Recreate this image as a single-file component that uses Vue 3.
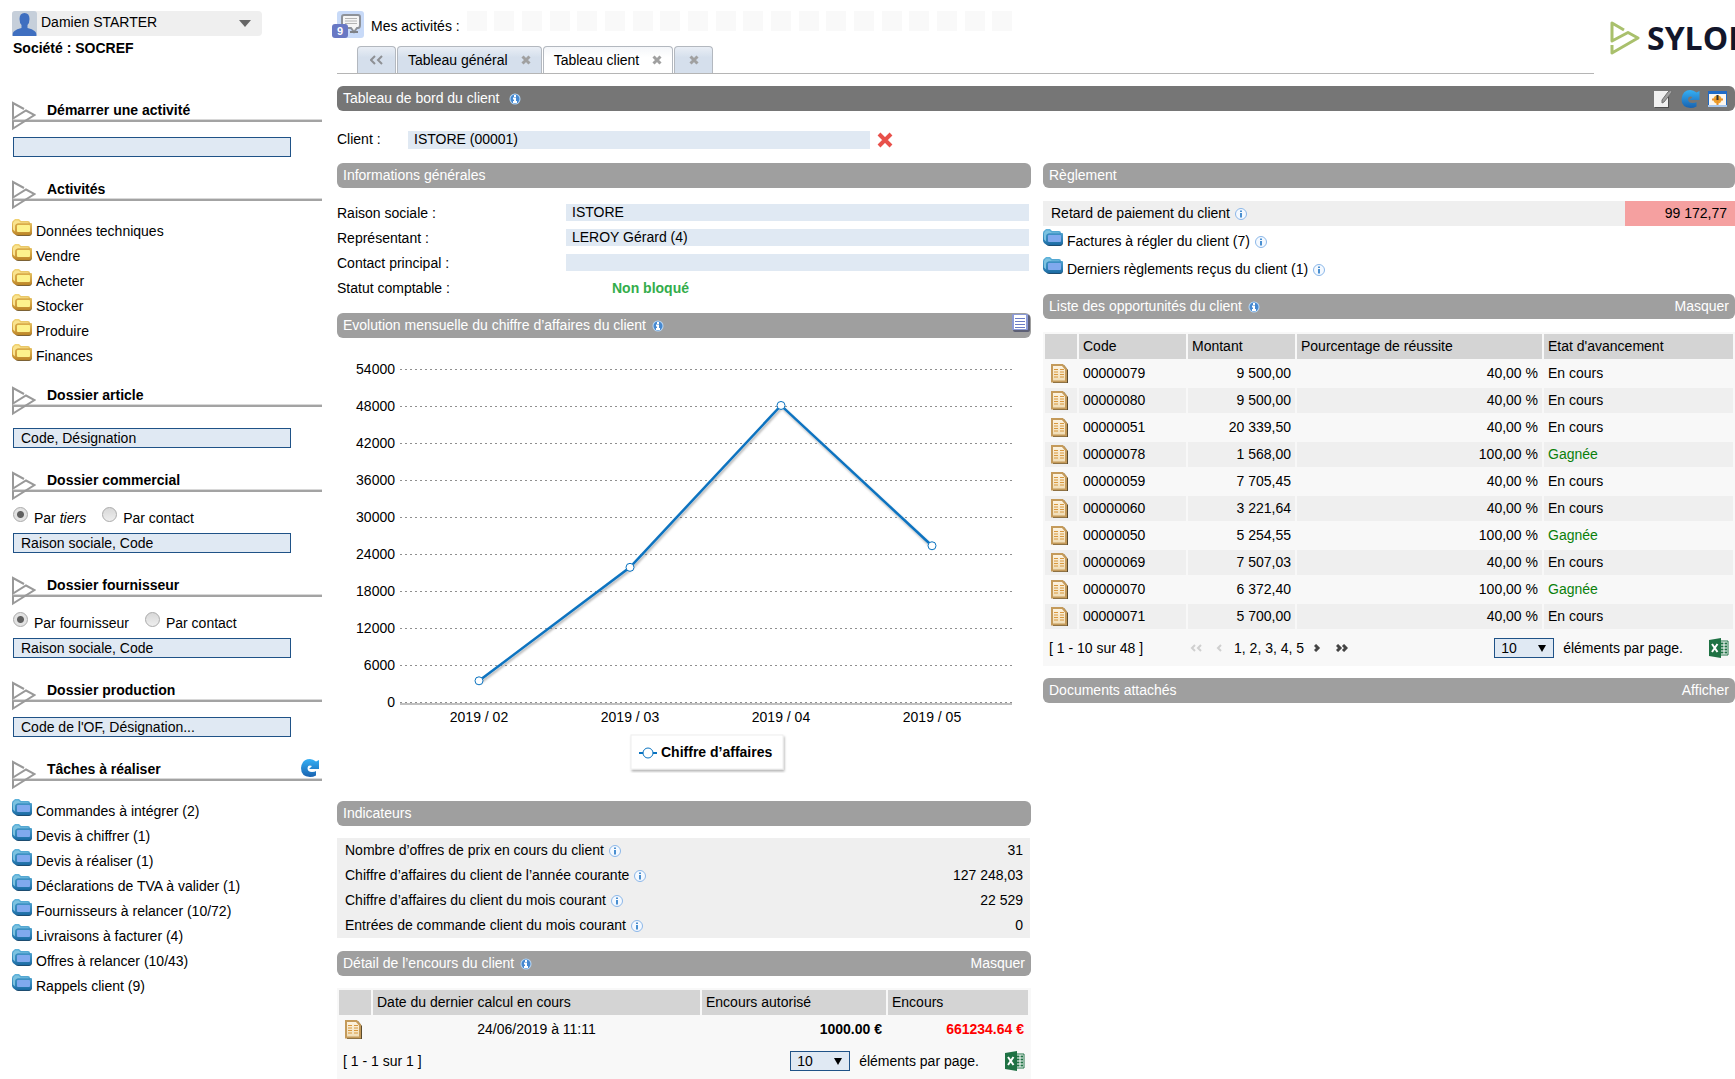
<script setup>
import { ref } from 'vue'

const activities = ['Données techniques', 'Vendre', 'Acheter', 'Stocker', 'Produire', 'Finances']
const tasks = [
  'Commandes à intégrer (2)',
  'Devis à chiffrer (1)',
  'Devis à réaliser (1)',
  'Déclarations de TVA à valider (1)',
  'Fournisseurs à relancer (10/72)',
  'Livraisons à facturer (4)',
  'Offres à relancer (10/43)',
  'Rappels client (9)',
]
const commercialBy = ref('tiers')
const supplierBy = ref('fournisseur')

const infos = [
  { id: 'raison', label: 'Raison sociale :', value: 'ISTORE' },
  { id: 'representant', label: 'Représentant :', value: 'LEROY Gérard (4)' },
  { id: 'contact', label: 'Contact principal :', value: '' },
]

const indicators = [
  { label: 'Nombre d’offres de prix en cours du client', value: '31' },
  { label: 'Chiffre d’affaires du client de l’année courante', value: '127 248,03' },
  { label: 'Chiffre d’affaires du client du mois courant', value: '22 529' },
  { label: 'Entrées de commande client du mois courant', value: '0' },
]

const opportunities = [
  ['00000079', '9 500,00', '40,00 %', 'En cours'],
  ['00000080', '9 500,00', '40,00 %', 'En cours'],
  ['00000051', '20 339,50', '40,00 %', 'En cours'],
  ['00000078', '1 568,00', '100,00 %', 'Gagnée'],
  ['00000059', '7 705,45', '40,00 %', 'En cours'],
  ['00000060', '3 221,64', '40,00 %', 'En cours'],
  ['00000050', '5 254,55', '100,00 %', 'Gagnée'],
  ['00000069', '7 507,03', '40,00 %', 'En cours'],
  ['00000070', '6 372,40', '100,00 %', 'Gagnée'],
  ['00000071', '5 700,00', '40,00 %', 'En cours'],
]

// Chart geometry, in viewBox units
const chart = { left: 63, right: 675, base: 365, step: 37, unit: 6000 }
const ticks = Array.from({ length: 10 }, (_, i) => ({
  value: i * chart.unit,
  y: chart.base - i * chart.step,
}))
const points = [
  { month: '2019 / 02', amount: 3600 },
  { month: '2019 / 03', amount: 22000 },
  { month: '2019 / 04', amount: 48250 },
  { month: '2019 / 05', amount: 25500 },
].map((p, i) => ({
  ...p,
  x: 142 + i * 151,
  y: chart.base - (p.amount / chart.unit) * chart.step,
}))
const line = points.map((p) => `${p.x},${p.y}`).join(' ')
</script>

<template>
  <svg class="defs" aria-hidden="true">
    <defs>
      <linearGradient id="g-gold" x1="0" y1="0" x2="0" y2="1">
        <stop offset="0" stop-color="#f2d474" /><stop offset="1" stop-color="#bd8526" />
      </linearGradient>
      <linearGradient id="g-blue" x1="0" y1="0" x2="0" y2="1">
        <stop offset="0" stop-color="#5fb4dc" /><stop offset="1" stop-color="#1a6aa3" />
      </linearGradient>
      <linearGradient id="g-refresh" x1="0" y1="0" x2="0" y2="1">
        <stop offset="0" stop-color="#35b0f5" /><stop offset="1" stop-color="#1862b0" />
      </linearGradient>
      <linearGradient id="g-sheet" x1="0" y1="0" x2="0" y2="1">
        <stop offset="0" stop-color="#fdf4e2" /><stop offset="1" stop-color="#f0dcb4" />
      </linearGradient>
    </defs>
    <symbol id="i-mark" viewBox="0 0 24 30">
      <path d="M12 8 1 2v15.500L14 9.500 22.500 14 1 27.500V20" fill="none" stroke="currentColor" stroke-width="2" />
    </symbol>
    <symbol id="i-folder-yellow" viewBox="0 0 20 17">
      <path d="M3 13h17q0 4-3 4H6q-2 0-3-2z" fill="#7c6235" />
      <path d="M0 4q0-2 2-3l1-1h4l2 2h7q2 0 2 2h1q1 0 1 1v8q0 3-3 3H5q-2 0-4-2l-1-2z" fill="url(#g-gold)" />
      <path d="M1 4l2-2.500h3.500l2 2H16l1 1H6q-3 0-3 3v5l-2-2z" fill="#fae48f" />
      <path d="M4 13V7q0-2 2-2h12" fill="none" stroke="#d4a03c" />
      <rect x="5" y="6" width="13" height="7" rx="1" fill="#fdf28c" />
    </symbol>
    <symbol id="i-folder-blue" viewBox="0 0 20 17">
      <path d="M3 13h17q0 4-3 4H6q-2 0-3-2z" fill="#1d4c70" />
      <path d="M0 4q0-2 2-3l1-1h4l2 2h7q2 0 2 2h1q1 0 1 1v8q0 3-3 3H5q-2 0-4-2l-1-2z" fill="url(#g-blue)" />
      <path d="M1 4l2-2.500h3.500l2 2H16l1 1H6q-3 0-3 3v5l-2-2z" fill="#7cc2e0" />
      <path d="M4 13V7q0-2 2-2h12" fill="none" stroke="#3488c0" />
      <rect x="5" y="6" width="13" height="7" rx="1" fill="#80a9ee" />
    </symbol>
    <symbol id="i-refresh" viewBox="0 0 18 18">
      <path d="M18 1v9H8l3-3Q7 5.500 6.500 9q0 4 4.500 4 3 0 4-1v4.500q-3 1.500-6 1.500Q0 17.500 0 9 1 0 9 0q3 0 6 2.500z" fill="url(#g-refresh)" />
    </symbol>
    <symbol id="i-info" viewBox="0 0 12 12">
      <circle cx="6" cy="6" r="5.500" fill="#f4f9ff" stroke="#8bb7e8" />
      <path d="M6 2.500v1.500M6 5v4.500" stroke="#4a8fd0" stroke-width="2" />
    </symbol>
    <symbol id="i-info-bar" viewBox="0 0 12 12">
      <circle cx="6" cy="6" r="5.500" fill="#b9d8f6" />
      <circle cx="6" cy="6" r="4.500" fill="#4588d0" />
      <path d="M6 2v2M4 5.500h2V9M4 9h4" fill="none" stroke="#fff" stroke-width="2" />
    </symbol>
    <symbol id="i-sheet" viewBox="0 0 17 19">
      <path d="M2 1h11l4 5v13H2z" fill="#5a4a2c" />
      <path d="M1 1h10.500L15 5v12.500H1z" fill="url(#g-sheet)" stroke="#c49a5a" stroke-width="2" />
      <path d="M3 5.500h4M9 5.500h4M3 8h4M9 8h4M3 10.500h4M9 10.500h4M3 13h4M9 13h4" stroke="#d8983f" />
    </symbol>
    <symbol id="i-cross" viewBox="0 0 10 10">
      <path d="M1.500 1.500l7 7m0-7l-7 7" stroke="#a0a0a0" stroke-width="3" />
    </symbol>
    <symbol id="i-excel" viewBox="0 0 20 20">
      <path d="M11 3h8v14h-8z" fill="#fff" stroke="#1f7244" />
      <path d="M12 5.500h6M12 8.500h6M12 11.500h6M12 14.500h6" stroke="#1f7244" stroke-width="2" stroke-dasharray="2.500 1" />
      <path d="M0 2 12 0v20L0 18z" fill="#1f7244" />
      <path d="M3 6l5.500 8M8.500 6L3 14" stroke="#fff" stroke-width="2" />
    </symbol>
  </svg>

  <div class="page">
    <aside class="sidebar">
      <button class="user" type="button">
        <svg class="avatar" viewBox="0 0 25 25" aria-hidden="true">
          <rect width="25" height="25" rx="3" fill="#c6cfda" />
          <path d="M12.500 2q5 0 5 6 0 4-2 6v3q5 1 7 3 2 1 2 5H.500q0-4 2-5 2-2 7-3v-3q-2-2-2-6 0-6 5-6z" fill="#3f6fc0" />
        </svg>
        <span>Damien STARTER</span>
        <svg class="caret" viewBox="0 0 12 7" aria-hidden="true"><path d="M0 0h12L6 7z" fill="#666" /></svg>
      </button>
      <p class="company">Société : SOCREF</p>

      <section class="block">
        <h2><svg class="mark"><use href="#i-mark" /></svg><label for="start">Démarrer une activité</label></h2>
        <input id="start" type="text" class="search tight" />
      </section>

      <section class="block">
        <h2><svg class="mark"><use href="#i-mark" /></svg>Activités</h2>
        <ul class="links">
          <li v-for="a in activities" :key="a">
            <a href="#"><svg class="folder"><use href="#i-folder-yellow" /></svg>{{ a }}</a>
          </li>
        </ul>
      </section>

      <section class="block">
        <h2><svg class="mark"><use href="#i-mark" /></svg><label for="article">Dossier article</label></h2>
        <input id="article" type="text" class="search loose" placeholder="Code, Désignation" />
      </section>

      <section class="block">
        <h2><svg class="mark"><use href="#i-mark" /></svg><label for="commercial">Dossier commercial</label></h2>
        <div class="radios">
          <label><input v-model="commercialBy" type="radio" name="commercial" value="tiers" /><span>Par <em>tiers</em></span></label>
          <label><input v-model="commercialBy" type="radio" name="commercial" value="contact" /><span>Par contact</span></label>
        </div>
        <input id="commercial" type="text" class="search" placeholder="Raison sociale, Code" />
      </section>

      <section class="block">
        <h2><svg class="mark"><use href="#i-mark" /></svg><label for="supplier">Dossier fournisseur</label></h2>
        <div class="radios">
          <label><input v-model="supplierBy" type="radio" name="supplier" value="fournisseur" /><span>Par fournisseur</span></label>
          <label><input v-model="supplierBy" type="radio" name="supplier" value="contact" /><span>Par contact</span></label>
        </div>
        <input id="supplier" type="text" class="search" placeholder="Raison sociale, Code" />
      </section>

      <section class="block">
        <h2><svg class="mark"><use href="#i-mark" /></svg><label for="production">Dossier production</label></h2>
        <input id="production" type="text" class="search tight" placeholder="Code de l'OF, Désignation..." />
      </section>

      <section class="block">
        <h2>
          <svg class="mark"><use href="#i-mark" /></svg>Tâches à réaliser
          <button class="reload" type="button" aria-label="Actualiser"><svg class="refresh"><use href="#i-refresh" /></svg></button>
        </h2>
        <ul class="links">
          <li v-for="t in tasks" :key="t">
            <a href="#"><svg class="folder"><use href="#i-folder-blue" /></svg>{{ t }}</a>
          </li>
        </ul>
      </section>
    </aside>

    <main class="main">
      <header class="top">
        <div class="nav">
          <div class="mine">
            <button class="messages" type="button" aria-label="Messages">
              <svg viewBox="0 0 27 27" aria-hidden="true">
                <rect width="27" height="27" rx="3" fill="#c8daf8" />
                <path d="M7 4h14q2 0 2 2v8q0 3-2 3h-1l-3 4-3-4H7q-2 0-2-3V6q0-2 2-2z" fill="#f5f5f5" stroke="#8e9299" stroke-width="2" />
                <path d="M8 7.500h12M8 10h12M8 12.500h12" stroke="#b4b4b4" />
                <path d="M13 21h8" stroke="#7f8288" stroke-width="2" />
              </svg>
              <span class="badge">9</span>
            </button>
            <span>Mes activités :</span>
            <div class="slots"><i v-for="n in 20" :key="n"></i></div>
          </div>
          <nav class="tabs">
            <button class="tab narrow" type="button" aria-label="Précédent">
              <svg class="back" viewBox="0 0 14 10" aria-hidden="true"><path d="M5 1 1 5l4 4M12 1 8 5l4 4" fill="none" stroke="#8e9094" stroke-width="2" /></svg>
            </button>
            <button class="tab" type="button">Tableau général<svg class="cross"><use href="#i-cross" /></svg></button>
            <button class="tab active" type="button">Tableau client<svg class="cross"><use href="#i-cross" /></svg></button>
            <button class="tab narrow" type="button" aria-label="Tout fermer"><svg class="cross"><use href="#i-cross" /></svg></button>
          </nav>
        </div>
        <div class="logo">
          <svg class="logo-mark" viewBox="0 0 30 34" aria-hidden="true">
            <path d="M14 9 2 2v18L18 11.500 28 17 2 32V24" fill="none" stroke="#a9c06c" stroke-width="3" stroke-linejoin="round" />
          </svg>
          <span>SYLOB</span>
        </div>
      </header>

      <div class="bar title">
        <h1>Tableau de bord du client</h1>
        <svg class="info"><use href="#i-info-bar" /></svg>
        <div class="tools">
          <button type="button" aria-label="Modifier">
            <svg viewBox="0 0 19 18" aria-hidden="true">
              <path d="M1 2h14v16H1z" fill="#4f4f4f" /><path d="M0 1h14v16H0z" fill="#f1f1f1" />
              <path d="M17 0l1 2-8 10-2 1v-3l6-8z" fill="#a0a0a0" stroke="#6f6f6f" />
            </svg>
          </button>
          <button type="button" aria-label="Actualiser"><svg class="refresh"><use href="#i-refresh" /></svg></button>
          <button type="button" aria-label="Planifier">
            <svg viewBox="0 0 19 18" aria-hidden="true">
              <path d="M0 1h19v16H0z" fill="#1f6bc8" /><path d="M1 4h17v11H1z" fill="#fbf6ef" /><path d="M0 15h19v2H0z" fill="#a9c8ee" />
              <circle cx="9.500" cy="9.500" r="4" fill="#f0a52c" /><path d="M4 9.500h11M9.500 9v6" stroke="#e8912a" stroke-width="2" />
              <path d="M9.500 5v5" stroke="#333" stroke-width="2" />
            </svg>
          </button>
        </div>
      </div>

      <div class="client">
        <label for="client">Client :</label>
        <input id="client" type="text" class="value" value="ISTORE (00001)" readonly />
        <button type="button" aria-label="Effacer le client">
          <svg viewBox="0 0 16 16" aria-hidden="true"><path d="M2 2l12 12M14 2L2 14" stroke="#e8504a" stroke-width="4" /></svg>
        </button>
      </div>

      <div class="columns">
        <div class="column">
          <div class="bar"><h2>Informations générales</h2></div>
          <div class="form">
            <div v-for="f in infos" :key="f.id" class="field">
              <label :for="f.id">{{ f.label }}</label>
              <input :id="f.id" type="text" class="value" :value="f.value" readonly />
            </div>
            <div class="field"><span class="lbl">Statut comptable :</span><strong class="status">Non bloqué</strong></div>
          </div>

          <div class="bar">
            <h2>Evolution mensuelle du chiffre d’affaires du client</h2>
            <svg class="info"><use href="#i-info-bar" /></svg>
            <button class="listing" type="button" aria-label="Voir les données">
              <svg viewBox="0 0 18 18" aria-hidden="true">
                <rect x="1" y="1" width="17" height="17" rx="2" fill="#5d6076" /><rect width="16" height="16" rx="1" fill="#8b9ad6" />
                <path d="M2 1h12v14H2z" fill="#fff" /><path d="M3 4.500h10M3 7.500h10M3 10.500h10M3 13.500h10" stroke="#6a7cc6" />
              </svg>
            </button>
          </div>
          <svg class="chart" viewBox="0 0 694 463" role="img" aria-label="Evolution mensuelle du chiffre d’affaires">
            <defs>
              <filter id="shade" x="-10%" y="-10%" width="120%" height="120%">
                <feDropShadow dx="1" dy="2" stdDeviation="1" flood-opacity=".3" />
              </filter>
            </defs>
            <rect :x="chart.left" :y="chart.base" :width="chart.right - chart.left" height="2" fill="#c0c0c0" />
            <g v-for="t in ticks" :key="t.value">
              <path :d="`M${chart.left} ${t.y - 0.5}H${chart.right}`" stroke="#8f8f8f" stroke-dasharray="2 3" />
              <text x="58" :y="t.y + 4" text-anchor="end">{{ t.value }}</text>
            </g>
            <polyline :points="line" fill="none" stroke="#0a73c0" stroke-width="2.500" filter="url(#shade)" />
            <g v-for="p in points" :key="p.month">
              <circle :cx="p.x" :cy="p.y" r="4" fill="#fff" stroke="#0a73c0" />
              <text :x="p.x" y="384" text-anchor="middle">{{ p.month }}</text>
            </g>
            <rect x="294" y="397" width="152" height="34" fill="#fff" stroke="#eee" filter="url(#shade)" />
            <path d="M302 415h18" stroke="#0a73c0" stroke-width="2" />
            <circle cx="311" cy="415" r="5" fill="#fff" stroke="#0a73c0" />
            <text x="324" y="419" font-weight="bold">Chiffre d’affaires</text>
          </svg>

          <div class="bar"><h2>Indicateurs</h2></div>
          <dl class="indicators">
            <div v-for="i in indicators" :key="i.label">
              <dt>{{ i.label }}<svg class="info"><use href="#i-info" /></svg></dt>
              <dd>{{ i.value }}</dd>
            </div>
          </dl>

          <div class="bar">
            <h2>Détail de l’encours du client</h2>
            <svg class="info"><use href="#i-info-bar" /></svg>
            <a href="#" class="toggle">Masquer</a>
          </div>
          <div class="panel">
            <table class="grid credit">
              <colgroup><col class="c-icon" /><col class="c-date" /><col class="c-limit" /><col class="c-used" /></colgroup>
              <thead><tr><th></th><th>Date du dernier calcul en cours</th><th>Encours autorisé</th><th>Encours</th></tr></thead>
              <tbody>
                <tr>
                  <td class="ico"><svg class="sheet"><use href="#i-sheet" /></svg></td>
                  <td class="mid">24/06/2019 à 11:11</td>
                  <td class="num"><b>1000.00 €</b></td>
                  <td class="num over"><b>661234.64 €</b></td>
                </tr>
              </tbody>
            </table>
            <div class="pager">
              <span>[ 1 - 1 sur 1 ]</span>
              <label class="size"><span class="picker"><select><option>10</option></select></span>éléments par page.</label>
              <button class="export" type="button" aria-label="Exporter vers Excel"><svg><use href="#i-excel" /></svg></button>
            </div>
          </div>
        </div>

        <div class="column right">
          <div class="bar"><h2>Règlement</h2></div>
          <div class="late">
            <span>Retard de paiement du client<svg class="info"><use href="#i-info" /></svg></span>
            <output>99 172,77</output>
          </div>
          <ul class="links payments">
            <li><a href="#"><svg class="folder"><use href="#i-folder-blue" /></svg>Factures à régler du client (7)</a><svg class="info"><use href="#i-info" /></svg></li>
            <li><a href="#"><svg class="folder"><use href="#i-folder-blue" /></svg>Derniers règlements reçus du client (1)</a><svg class="info"><use href="#i-info" /></svg></li>
          </ul>

          <div class="bar">
            <h2>Liste des opportunités du client</h2>
            <svg class="info"><use href="#i-info-bar" /></svg>
            <a href="#" class="toggle">Masquer</a>
          </div>
          <div class="panel">
            <table class="grid">
              <colgroup><col class="c-icon" /><col class="c-code" /><col class="c-code" /><col class="c-rate" /><col /></colgroup>
              <thead><tr><th></th><th>Code</th><th>Montant</th><th>Pourcentage de réussite</th><th>Etat d'avancement</th></tr></thead>
              <tbody>
                <tr v-for="o in opportunities" :key="o[0]">
                  <td class="ico"><svg class="sheet"><use href="#i-sheet" /></svg></td>
                  <td>{{ o[0] }}</td>
                  <td class="num">{{ o[1] }}</td>
                  <td class="num">{{ o[2] }}</td>
                  <td :class="{ won: o[3] === 'Gagnée' }">{{ o[3] }}</td>
                </tr>
              </tbody>
            </table>
            <div class="pager">
              <span class="range">[ 1 - 10 sur 48 ]</span>
              <div class="pages">
                <svg class="step" viewBox="0 0 12 8" aria-hidden="true"><path d="M5 1 2 4l3 3M11 1 8 4l3 3" fill="none" stroke="#d0d0d0" stroke-width="2" /></svg>
                <svg class="step" viewBox="0 0 12 8" aria-hidden="true"><path d="M9 1 6 4l3 3" fill="none" stroke="#d0d0d0" stroke-width="2" /></svg>
                <span>1, <a href="#">2</a>, <a href="#">3</a>, <a href="#">4</a>, <a href="#">5</a></span>
                <svg class="step" viewBox="0 0 12 8" aria-hidden="true"><path d="M1 1l3 3-3 3" fill="none" stroke="#444" stroke-width="3" /></svg>
                <svg class="step" viewBox="0 0 12 8" aria-hidden="true"><path d="M1 1l3 3-3 3M7 1l3 3-3 3" fill="none" stroke="#444" stroke-width="3" /></svg>
              </div>
              <label class="size"><span class="picker"><select><option>10</option></select></span>éléments par page.</label>
              <button class="export" type="button" aria-label="Exporter vers Excel"><svg><use href="#i-excel" /></svg></button>
            </div>
          </div>

          <div class="bar"><h2>Documents attachés</h2><a href="#" class="toggle">Afficher</a></div>
        </div>
      </div>
    </main>
  </div>
</template>

<style>
body {
  margin: 0;
  background: #fff;
  overflow-x: hidden;
}
</style>

<style scoped>
.defs {
  position: absolute;
  width: 0;
  height: 0;
}
.page {
  display: grid;
  grid-template-columns: 325px minmax(0, 1fr);
  gap: 12px;
  font: 14px/25px "Liberation Sans", Arial, sans-serif;
  color: #000;
}
h1, h2, p, ul, dl, dd {
  margin: 0;
  padding: 0;
}
a {
  color: inherit;
  text-decoration: none;
}
button, input, select {
  font: inherit;
  color: inherit;
  box-sizing: border-box;
  margin: 0;
}
button {
  border: 0;
  padding: 0;
  background: none;
}
svg {
  display: block;
  flex: none;
}

/* Sidebar */
.sidebar {
  padding: 11px 3px 0 12px;
}
.user {
  display: flex;
  align-items: center;
  gap: 4px;
  width: 250px;
  height: 25px;
  padding-right: 11px;
  border-radius: 4px;
  background: #efefef;
}
.avatar {
  width: 25px;
  height: 25px;
}
.user span {
  line-height: 22px;
  padding-bottom: 3px;
}
.caret {
  width: 12px;
  height: 7px;
  margin-left: auto;
}
.company {
  margin-bottom: 40px;
  padding-left: 1px;
  font-weight: bold;
}
.block {
  margin-bottom: 23px;
}
.block:has(.links) {
  margin-bottom: 17px;
}
.block h2 {
  display: flex;
  height: 30px;
  gap: 11px;
  font-size: 14px;
  line-height: 18px;
  background: linear-gradient(#d8d8d8 0 1px, #a3a3a3 1px 3px) 0 18px / 100% 3px no-repeat;
}
.mark {
  width: 24px;
  height: 30px;
  color: #999;
}
.reload {
  height: 18px;
  margin: -1px 3px 0 auto;
}
.refresh {
  width: 18px;
  height: 18px;
}
.search {
  display: block;
  width: 278px;
  height: 20px;
  margin-left: 1px;
  padding: 0 7px;
  border: 1px solid #1f5287;
  border-radius: 0;
  background: #e0e9f3;
}
.search::placeholder {
  color: #000;
  opacity: 1;
}
.tight {
  margin-top: 6px;
}
.loose {
  margin-top: 12px;
}
.links {
  list-style: none;
}
.block .links {
  padding-top: 9px;
}
.links li, .links a {
  display: flex;
  height: 25px;
}
.links a {
  gap: 4px;
}
.folder {
  width: 20px;
  height: 17px;
}
.radios {
  display: flex;
  gap: 16px;
  height: 32px;
  padding-left: 1px;
}
.radios label {
  display: flex;
  gap: 6px;
  line-height: 34px;
}
.radios input {
  appearance: none;
  width: 15px;
  height: 15px;
  margin-top: 6px;
  border: 1px solid #aaa;
  border-radius: 50%;
  background: linear-gradient(#d8d8d8, #eee);
}
.radios input:checked {
  background: radial-gradient(circle, #606060 0 3px, #e2e2e2 4px);
}

/* Header */
.top {
  display: flex;
  height: 74px;
  margin-bottom: 12px;
}
.nav {
  flex: 1;
  display: flex;
  flex-direction: column;
  justify-content: space-between;
  padding-top: 11px;
  border-bottom: 1px solid #b5b5b5;
  box-sizing: border-box;
}
.mine {
  display: flex;
  gap: 7px;
  height: 27px;
  line-height: 30px;
}
.messages {
  position: relative;
  width: 27px;
  height: 27px;
}
.badge {
  position: absolute;
  left: -5px;
  bottom: 0;
  width: 16px;
  height: 14px;
  border-radius: 3px;
  background: #6878c4;
  color: #fff;
  font: bold 11px/14px "Liberation Sans", Arial, sans-serif;
}
.slots {
  display: flex;
  justify-content: space-between;
  width: 546px;
}
.slots i {
  width: 20px;
  height: 20px;
  background: #f9f9f9;
}
.tabs {
  display: flex;
  gap: 1px;
  padding-left: 20px;
}
.tab {
  display: flex;
  align-items: center;
  justify-content: center;
  gap: 13px;
  height: 27px;
  padding: 0 10px;
  border: 1px solid #b3b8bf;
  border-bottom: 0;
  border-radius: 4px 4px 0 0;
  background: linear-gradient(#e9eef5, #d5dfec 40%);
}
.tab.active {
  background: linear-gradient(#f4f6f9, #fff 40%);
}
.tab.narrow {
  width: 39px;
}
.cross {
  width: 10px;
  height: 10px;
}
.back {
  width: 14px;
  height: 10px;
}
.logo {
  display: flex;
  gap: 7px;
  width: 125px;
  padding: 21px 0 0 16px;
  overflow: hidden;
  color: #12162b;
  font: bold 32px/34px "Open Sans", "Noto Sans", sans-serif;
}
.logo-mark {
  width: 30px;
  height: 34px;
}

/* Bars */
.bar {
  display: flex;
  align-items: center;
  gap: 6px;
  height: 25px;
  padding: 0 6px;
  border-radius: 6px;
  background: #9f9f9f;
  color: #fff;
}
.bar h1, .bar h2 {
  font-size: 14px;
  font-weight: normal;
}
.bar.title {
  gap: 10px;
  background: #767676;
}
.info {
  width: 12px;
  height: 12px;
}
.toggle {
  margin-left: auto;
}
.tools {
  display: flex;
  align-items: center;
  gap: 8px;
  margin-left: auto;
  padding-right: 2px;
}
.tools svg {
  width: 19px;
  height: 18px;
}
.listing {
  align-self: flex-start;
  margin: 1px -5px 0 auto;
}
.listing svg {
  width: 18px;
  height: 18px;
}

/* Client */
.client {
  display: flex;
  align-items: center;
  height: 24px;
  margin: 17px 0 11px;
}
.client label {
  width: 71px;
  padding-bottom: 2px;
}
.client .value {
  flex: 0 1 462px;
  height: 18px;
  padding-bottom: 2px;
}
.client svg {
  width: 16px;
  height: 16px;
  margin-left: 7px;
}
.value {
  height: 17px;
  padding: 0 6px;
  border: 0;
  border-radius: 0;
  background: #e0e9f3;
}
.columns {
  display: grid;
  grid-template-columns: minmax(0, 694fr) minmax(0, 692fr);
  gap: 12px;
  align-items: start;
}
.form {
  margin: 12px 2px 13px 0;
}
.field {
  display: flex;
  align-items: center;
  height: 25px;
}
.field label, .lbl {
  flex: 0 0 229px;
  padding-top: 2px;
}
.field .value {
  flex: 1;
  min-width: 0;
}
.status {
  padding: 2px 0 0 46px;
  color: #33ad4b;
}
.chart {
  width: 100%;
  height: auto;
  font-size: 14px;
}
.indicators {
  margin: 12px 1px 13px 0;
  background: #efefef;
}
.indicators div {
  display: flex;
  justify-content: space-between;
  padding: 0 7px 0 8px;
}
.indicators dt, .late span {
  display: flex;
  align-items: center;
  gap: 5px;
}

/* Tables */
.panel {
  margin: 12px 0;
  padding-bottom: 1px;
  background: #f8f8f8;
}
.credit {
  padding-right: 1px;
}
.panel:last-child {
  margin-bottom: 0;
}
.grid {
  width: 100%;
  table-layout: fixed;
  border-collapse: separate;
  border-spacing: 2px;
}
.grid th, .grid td {
  height: 25px;
  padding: 0 4px;
  text-align: left;
}
.grid th {
  font-weight: normal;
  background: #d4d4d4;
}
.grid tbody tr:nth-child(even) td {
  background: #efefef;
}
.grid .num {
  text-align: right;
}
.grid .mid {
  text-align: center;
}
.grid .over {
  color: #f00;
}
.grid .won {
  color: #0a800a;
}
.c-icon {
  width: 32px;
}
.c-code {
  width: 107px;
}
.c-rate {
  width: 245px;
}
.c-limit {
  width: 184px;
}
.c-used {
  width: 140px;
}
.sheet {
  width: 17px;
  height: 19px;
  margin-left: 2px;
}
.pager {
  display: flex;
  align-items: center;
  height: 34px;
  padding: 0 6px;
}
.range {
  width: 141px;
}
.pages {
  display: flex;
  align-items: center;
  gap: 10px;
}
.step {
  width: 12px;
  height: 8px;
}
.size {
  display: flex;
  align-items: center;
  gap: 9px;
  margin-left: auto;
}
.picker {
  position: relative;
}
.picker::after {
  content: "";
  position: absolute;
  top: 7px;
  right: 8px;
  border: 4px solid transparent;
  border-top: 7px solid #000;
  border-bottom: 0;
  pointer-events: none;
}
.picker select {
  display: block;
  appearance: none;
  width: 60px;
  height: 20px;
  padding: 0 6px;
  border: 1px solid #1f5287;
  border-radius: 0;
  background: #e0e9f3;
  line-height: 18px;
}
.export {
  margin-left: 26px;
}
.export svg {
  width: 20px;
  height: 20px;
}

/* Right column */
.right .panel {
  margin-top: 13px;
}
.late {
  display: flex;
  margin: 13px 0 3px;
  background: #efefef;
}
.late span {
  flex: 1;
  padding-left: 8px;
}
.late output {
  width: 102px;
  padding-right: 8px;
  text-align: right;
  background: #f5a0a0;
}
.payments {
  display: grid;
  gap: 3px;
  margin-bottom: 12px;
}
.payments li {
  align-items: center;
  gap: 5px;
}
</style>
